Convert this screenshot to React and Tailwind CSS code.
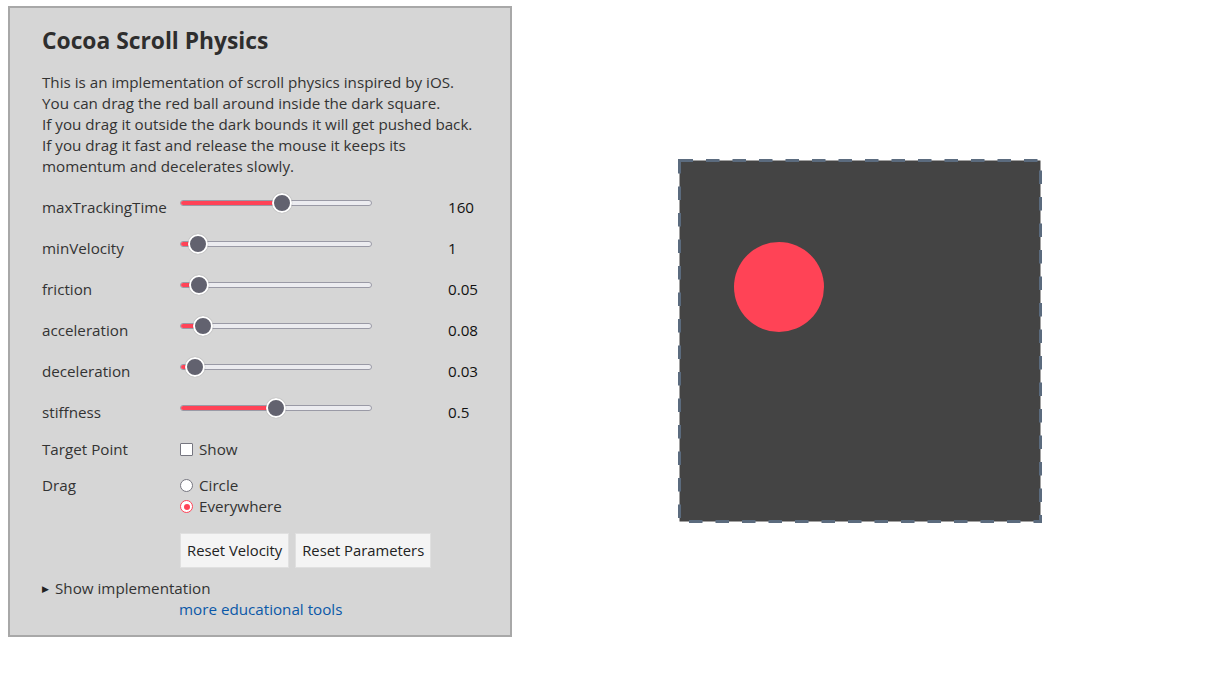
import React from 'react';

const sliders = [
  { label: 'maxTrackingTime', value: '160', pct: 0.535 },
  { label: 'minVelocity', value: '1', pct: 0.047 },
  { label: 'friction', value: '0.05', pct: 0.052 },
  { label: 'acceleration', value: '0.08', pct: 0.076 },
  { label: 'deceleration', value: '0.03', pct: 0.029 },
  { label: 'stiffness', value: '0.5', pct: 0.5 },
];

function Slider({ pct }) {
  return (
    <div className="relative h-[20px] w-[192px] -mt-[10px]">
      <div className="absolute left-0 right-0 top-[7px] h-[6px] rounded-full border border-[#9a9aa6] bg-[#ececf0] overflow-hidden">
        <div className="h-full bg-[#ff4357]" style={{ width: `${pct * 100}%` }} />
      </div>
      <div
        className="absolute top-0 h-[20px] w-[20px] -ml-[10px] rounded-full border-2 border-white bg-[#62626f] shadow-[0_0_1px_rgba(0,0,0,0.4)]"
        style={{ left: `${10 + pct * 172}px` }}
      />
    </div>
  );
}

export default function App() {
  return (
    <div
      className="flex items-start text-[#333] text-[15.2px]"
      style={{ fontFamily: '"Open Sans", "Noto Sans", sans-serif' }}
    >
      <div className="mt-[6px] ml-[8px] w-[504px] h-[631px] shrink-0 border-2 border-[#a8a8a8] bg-[#d6d6d6] pl-[32px] pr-[20px] pt-[18px]">
        <h1 className="text-[22.8px] leading-[30px] font-bold text-[#2e2e2e]">Cocoa Scroll Physics</h1>
        <p className="mt-[16px] leading-[21px] text-[#333]">
          This is an implementation of scroll physics inspired by iOS.<br />
          You can drag the red ball around inside the dark square.<br />
          If you drag it outside the dark bounds it will get pushed back.<br />
          If you drag it fast and release the mouse it keeps its<br />
          momentum and decelerates slowly.
        </p>

        <div className="mt-[10px] flex flex-col">
          {sliders.map((s) => (
            <div key={s.label} className="grid grid-cols-[138px_192px_1fr] items-center h-[41px]">
              <span>{s.label}</span>
              <Slider pct={s.pct} />
              <span className="pl-[76px] text-[#111]">{s.value}</span>
            </div>
          ))}
        </div>

        <div className="grid grid-cols-[138px_1fr] items-center h-[33px]">
          <span>Target Point</span>
          <label className="flex items-center gap-[6px]">
            <span className="w-[13px] h-[13px] border border-[#767680] bg-white rounded-[1px]" />
            Show
          </label>
        </div>

        <div className="grid grid-cols-[138px_1fr] mt-[9px]">
          <span className="leading-[21px]">Drag</span>
          <div className="flex flex-col">
            <label className="flex items-center gap-[6px] leading-[21px]">
              <span className="w-[13px] h-[13px] rounded-full border border-[#767680] bg-white" />
              Circle
            </label>
            <label className="flex items-center gap-[6px] leading-[21px]">
              <span className="w-[13px] h-[13px] rounded-full border-[1.5px] border-[#ff4357] bg-white flex items-center justify-center">
                <span className="w-[6px] h-[6px] rounded-full bg-[#ff4357]" />
              </span>
              Everywhere
            </label>
          </div>
        </div>

        <div className="flex gap-[6px] ml-[138px] mt-[16px]">
          <button className="h-[35px] px-[6px] bg-[#f4f4f4] border border-[#e0e0e0] text-[14.8px] text-[#222]">Reset Velocity</button>
          <button className="h-[35px] px-[6px] bg-[#f4f4f4] border border-[#e0e0e0] text-[14.8px] text-[#222]">Reset Parameters</button>
        </div>

        <div className="mt-[10px] flex items-center gap-[6px] leading-[21px]">
          <span className="text-[9px] text-[#222]">▶</span>
          Show implementation
        </div>
        <a href="#" className="block ml-[137px] leading-[21px] text-[#0b58a8]">more educational tools</a>
      </div>

      <div className="flex-1 flex justify-center pt-[159px]">
        <svg width="364" height="364" viewBox="0 0 364 364" className="-ml-[2px]">
          <rect x="1.5" y="1.5" width="361" height="361" fill="#444444" stroke="#5b6b7e" strokeWidth="3" strokeDasharray="13.5 13" />
          <circle cx="101" cy="128" r="45" fill="#ff4356" />
        </svg>
      </div>
    </div>
  );
}
